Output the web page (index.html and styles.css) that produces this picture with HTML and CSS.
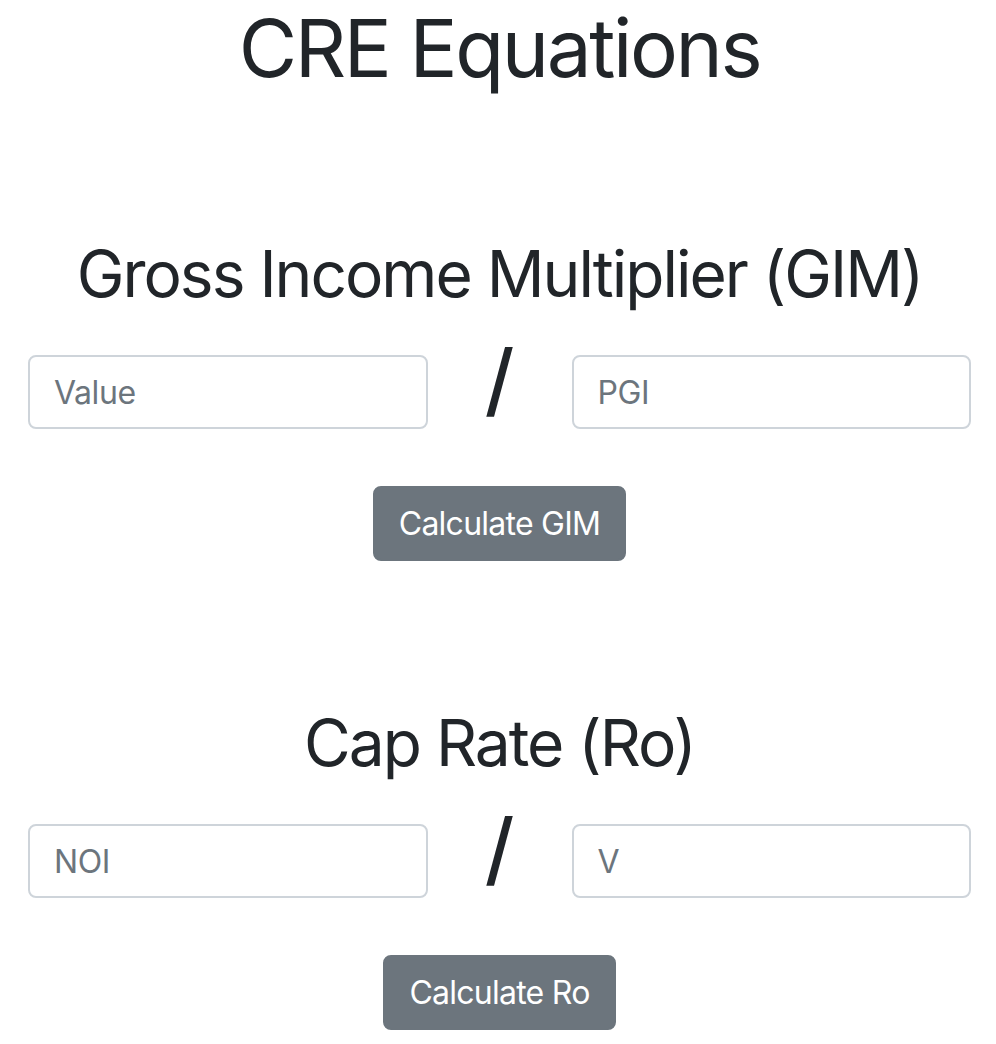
FILE: index.html
```html
<!DOCTYPE html>
<html lang="en">
<head>
<meta charset="utf-8">
<title>CRE Equations</title>
<link rel="stylesheet" href="styles.css">
</head>
<body>
<main class="page">
  <h1 class="title">CRE Equations</h1>

  <section class="equation">
    <h2 class="eq-title">Gross Income Multiplier (GIM)</h2>
    <div class="eq-row">
      <input class="field" type="text" placeholder="Value">
      <span class="slash">/</span>
      <input class="field" type="text" placeholder="PGI">
    </div>
    <div class="actions">
      <button class="btn" type="button">Calculate GIM</button>
    </div>
  </section>

  <section class="equation">
    <h2 class="eq-title">Cap Rate (Ro)</h2>
    <div class="eq-row">
      <input class="field" type="text" placeholder="NOI">
      <span class="slash">/</span>
      <input class="field" type="text" placeholder="V">
    </div>
    <div class="actions">
      <button class="btn" type="button">Calculate Ro</button>
    </div>
  </section>
</main>
</body>
</html>
```

FILE: styles.css
```css
* { box-sizing: border-box; }

html, body {
  margin: 0;
  padding: 0;
  background: #fff;
}

body {
  font-family: Inter, "Noto Sans", "Liberation Sans", sans-serif;
  color: #212529;
}

.page {
  padding: 0 25px 0 28px;
}

.title {
  margin: 0;
  font-size: 80px;
  line-height: 96px;
  font-weight: 400;
  letter-spacing: -2.4px;
  text-align: center;
}

.equation {
  padding-top: 139px;
}

.equation + .equation {
  padding-top: 143px;
}

.eq-title {
  margin: 0;
  font-size: 64px;
  line-height: 77px;
  font-weight: 400;
  letter-spacing: -2px;
  text-align: center;
}

.eq-row {
  margin-top: 43px;
  display: grid;
  grid-template-columns: 1fr 144px 1fr;
  align-items: start;
}

.field {
  display: block;
  width: 100%;
  height: 74px;
  padding: 12px 24px;
  border: 2px solid #ced4da;
  border-radius: 8px;
  font-family: inherit;
  font-size: 32px;
  letter-spacing: -0.4px;
  color: #495057;
  background: #fff;
}

.field::placeholder {
  color: #6c757d;
  opacity: 1;
}

.slash {
  display: block;
  text-align: center;
  font-size: 80px;
  font-weight: 500;
  line-height: 47px;
  color: #212529;
}

.actions {
  margin-top: 57px;
  display: flex;
  justify-content: center;
}

.btn {
  height: 75px;
  padding: 0 24px;
  border: 2px solid #6c757d;
  border-radius: 8px;
  background: #6c757d;
  color: #fff;
  font-family: inherit;
  font-size: 32px;
  letter-spacing: -0.75px;
  line-height: 48px;
}
```
